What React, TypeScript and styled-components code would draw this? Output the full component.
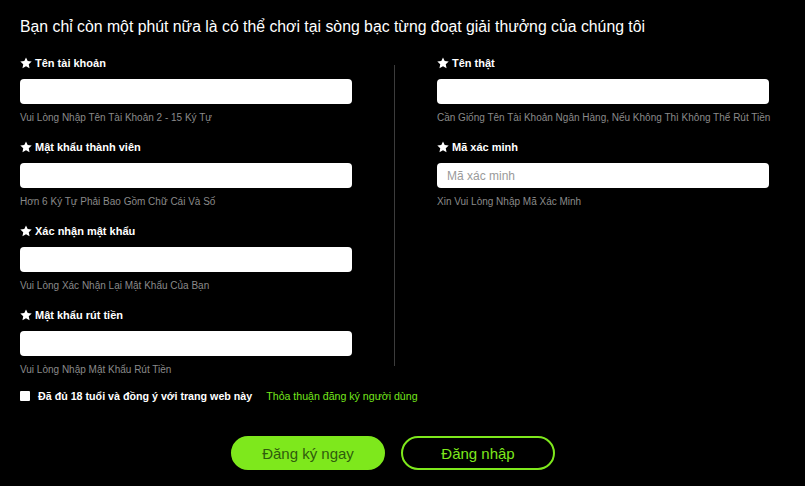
import React from "react";
import styled, { createGlobalStyle } from "styled-components";

const GlobalStyle = createGlobalStyle`
  html, body {
    margin: 0;
    padding: 0;
    background: #000;
  }

  body {
    font-family: "Liberation Sans", Arial, sans-serif;
    color: #fff;
  }
`;

const leftFields = [
  { label: "Tên tài khoản", hint: "Vui Lòng Nhập Tên Tài Khoản 2 - 15 Ký Tự" },
  { label: "Mật khẩu thành viên", hint: "Hơn 6 Ký Tự Phải Bao Gồm Chữ Cái Và Số" },
  { label: "Xác nhận mật khẩu", hint: "Vui Lòng Xác Nhận Lại Mật Khẩu Của Bạn" },
  { label: "Mật khẩu rút tiền", hint: "Vui Lòng Nhập Mật Khẩu Rút Tiền" },
];

const rightFields = [
  {
    label: "Tên thật",
    hint: "Cần Giống Tên Tài Khoản Ngân Hàng, Nếu Không Thì Không Thể Rút Tiền",
  },
  { label: "Mã xác minh", hint: "Xin Vui Lòng Nhập Mã Xác Minh", placeholder: "Mã xác minh" },
];

const Star = () => (
  <svg width="12" height="12" viewBox="0 0 24 24">
    <path
      fill="#fff"
      d="M12 .8l3.4 7.3 8 .9-5.9 5.5 1.6 7.9L12 18.4l-7.1 4 1.6-7.9L.6 9l8-.9z"
    />
  </svg>
);

type FieldProps = { label: string; hint: string; placeholder?: string };

const Field = ({ label, hint, placeholder }: FieldProps) => (
  <FieldBlock>
    <Label>
      <Star />
      {label}
    </Label>
    <Input placeholder={placeholder} />
    <Hint>{hint}</Hint>
  </FieldBlock>
);

export default function App() {
  return (
    <>
      <GlobalStyle />
      <Page>
        <Title>
          Bạn chỉ còn một phút nữa là có thể chơi tại sòng bạc từng đoạt giải thưởng của chúng tôi
        </Title>
        <FormGrid>
          <Column>
            {leftFields.map((f) => (
              <Field key={f.label} {...f} />
            ))}
          </Column>
          <Divider />
          <Column>
            {rightFields.map((f) => (
              <Field key={f.label} {...f} />
            ))}
          </Column>
        </FormGrid>
        <AgreeRow>
          <Checkbox />
          <AgreeText>Đã đủ 18 tuổi và đồng ý với trang web này</AgreeText>
          <AgreeLink href="#">Thỏa thuận đăng ký người dùng</AgreeLink>
        </AgreeRow>
        <ButtonRow>
          <ActionButton $primary>Đăng ký ngay</ActionButton>
          <ActionButton>Đăng nhập</ActionButton>
        </ButtonRow>
      </Page>
    </>
  );
}

const Page = styled.div`
  width: 766px;
  height: 486px;
  box-sizing: border-box;
  padding: 18px 0 0 20px;
`;

const Title = styled.h1`
  margin: 0;
  font-size: 15.8px;
  font-weight: 400;
  line-height: 18px;
  white-space: nowrap;
  color: #fff;
`;

const FormGrid = styled.div`
  display: grid;
  grid-template-columns: 332px 1px 332px;
  column-gap: 42px;
  margin-top: 19px;
`;

const Column = styled.div`
  display: flex;
  flex-direction: column;
  gap: 15px;
`;

const Divider = styled.div`
  background: #3c3c3c;
  margin: 10px 0 10px;
`;

const FieldBlock = styled.div`
  display: flex;
  flex-direction: column;
`;

const Label = styled.div`
  display: flex;
  align-items: center;
  gap: 3px;
  height: 16px;
  font-size: 11px;
  font-weight: 700;
  color: #fff;
`;

const Input = styled.input`
  box-sizing: border-box;
  width: 332px;
  height: 25px;
  margin-top: 8px;
  padding: 0 10px;
  border: none;
  border-radius: 4px;
  background: #fff;
  font-family: "Liberation Sans", Arial, sans-serif;
  font-size: 12px;
  color: #333;
  outline: none;

  &::placeholder {
    color: #9a9a9a;
  }
`;

const Hint = styled.div`
  margin-top: 8px;
  font-size: 10px;
  line-height: 12px;
  white-space: nowrap;
  color: #8a8a8a;
`;

const AgreeRow = styled.div`
  display: flex;
  align-items: center;
  height: 14px;
  margin-top: 13px;
`;

const Checkbox = styled.span`
  width: 10px;
  height: 10px;
  background: #fff;
  border-radius: 1px;
  margin-right: 8px;
`;

const AgreeText = styled.span`
  font-size: 10.7px;
  font-weight: 700;
  color: #fff;
`;

const AgreeLink = styled.a`
  margin-left: 14px;
  font-size: 10.6px;
  color: #74e61b;
  text-decoration: none;
`;

const ButtonRow = styled.div`
  display: flex;
  justify-content: center;
  gap: 16px;
  margin-top: 33px;
`;

const ActionButton = styled.button<{ $primary?: boolean }>`
  box-sizing: border-box;
  width: 154px;
  height: 34px;
  border-radius: 17px;
  border: 2px solid #7ee81c;
  background: ${(p) => (p.$primary ? "#7ee81c" : "transparent")};
  color: ${(p) => (p.$primary ? "#2f5c0c" : "#7ee81c")};
  font-family: "Liberation Sans", Arial, sans-serif;
  font-size: 15px;
  cursor: pointer;
`;
